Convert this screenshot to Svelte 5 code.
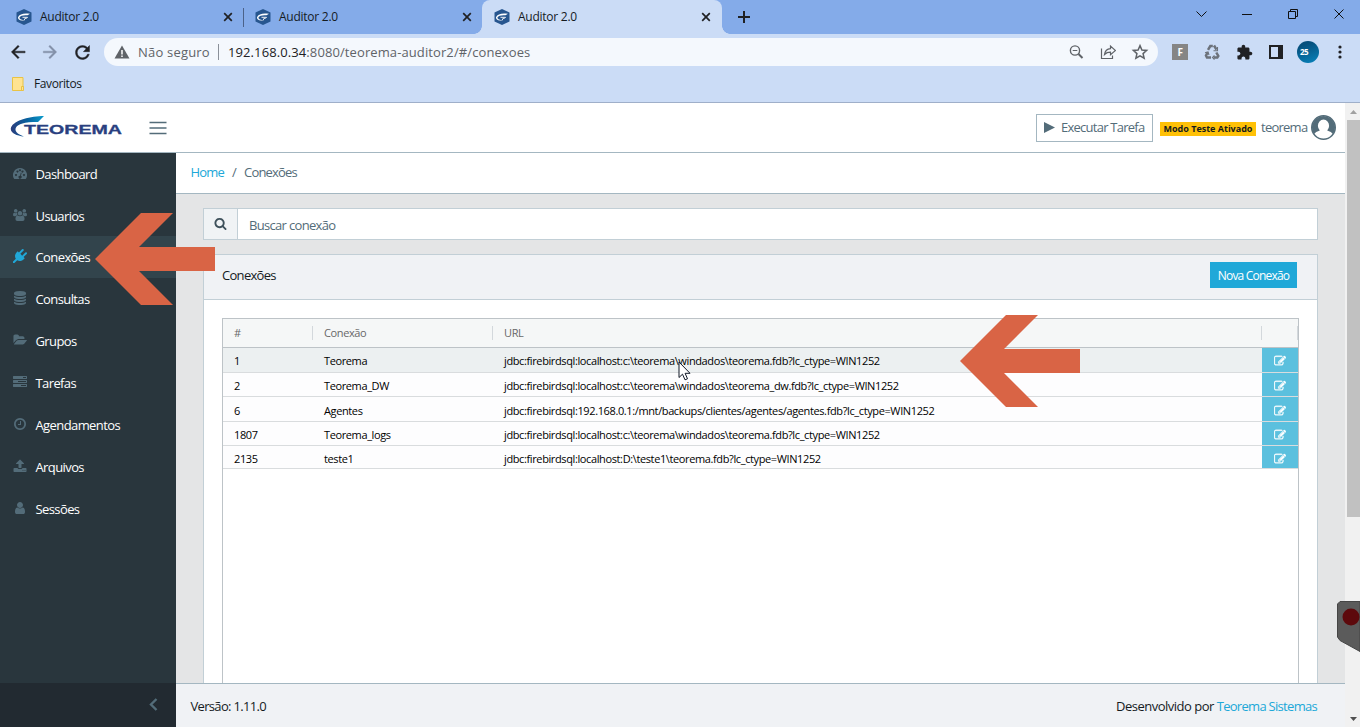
<script lang="ts">
	type MenuItem = { label: string; icon: string };
	type Connection = { id: number; name: string; url: string; height: number };

	const tabs = [
		{ title: 'Auditor 2.0', active: false },
		{ title: 'Auditor 2.0', active: false },
		{ title: 'Auditor 2.0', active: true }
	];

	const menu: MenuItem[] = [
		{ label: 'Dashboard', icon: 'dashboard' },
		{ label: 'Usuarios', icon: 'users' },
		{ label: 'Conexões', icon: 'plug' },
		{ label: 'Consultas', icon: 'database' },
		{ label: 'Grupos', icon: 'folder' },
		{ label: 'Tarefas', icon: 'tasks' },
		{ label: 'Agendamentos', icon: 'clock' },
		{ label: 'Arquivos', icon: 'upload' },
		{ label: 'Sessões', icon: 'user' }
	];

	const connections: Connection[] = [
		{ id: 1, name: 'Teorema', url: 'jdbc:firebirdsql:localhost:c:\\teorema\\windados\\teorema.fdb?lc_ctype=WIN1252', height: 25 },
		{ id: 2, name: 'Teorema_DW', url: 'jdbc:firebirdsql:localhost:c:\\teorema\\windados\\teorema_dw.fdb?lc_ctype=WIN1252', height: 24 },
		{ id: 6, name: 'Agentes', url: 'jdbc:firebirdsql:192.168.0.1:/mnt/backups/clientes/agentes/agentes.fdb?lc_ctype=WIN1252', height: 25 },
		{ id: 1807, name: 'Teorema_logs', url: 'jdbc:firebirdsql:localhost:c:\\teorema\\windados\\teorema.fdb?lc_ctype=WIN1252', height: 24 },
		{ id: 2135, name: 'teste1', url: 'jdbc:firebirdsql:localhost:D:\\teste1\\teorema.fdb?lc_ctype=WIN1252', height: 23 }
	];

	const icons: Record<string, string> = {
		dashboard:
			'M896 256a896 896 0 0 0-756 1376q19 32 56 32h1400q37 0 56-32A896 896 0 0 0 896 256zM384 1024a128 128 0 1 1-1 0zM576 576a128 128 0 1 1-1 0zM896 400a128 128 0 1 1-1 0zM1216 576a128 128 0 1 1-1 0zM1408 1024a128 128 0 1 1-1 0zM1004 850l104 28-102 382a192 192 0 1 1-104-28z',
		users:
			'M896 384a288 288 0 1 1-1 0zM350 128a230 230 0 1 1-1 0zM1442 128a230 230 0 1 1-1 0zM130 600q210 120 400-10-30 180 50 330-150 20-240 120H130q-130 0-130-130 0-250 130-310zM1662 600q-210 120-400-10 30 180-50 330 150 20 240 120h210q130 0 130-130 0-250-130-310zM600 950q296 200 592 0 270 0 290 470 0 244-244 244H554q-244 0-244-244 20-470 290-470z',
		plug:
			'M1755 453q37 38 37 90.5t-37 90.5l-401 400 150 150-160 160q-163 163-389.5 186.5t-411.5-100.5l-362 362h-181v-181l362-362q-124-185-100.5-411.5t186.5-389.5l160-160 150 150 400-401q38-37 91-37t90 37 37 90.5-37 90.5l-400 401 234 234 401-400q38-37 91-37t90 37z',
		database:
			'M896 768q237 0 443-43t325-127v170q0 69-103 128t-280 93.5-385 34.5-385-34.5-280-93.5-103-128v-170q119 84 325 127t443 43zM896 1536q237 0 443-43t325-127v170q0 69-103 128t-280 93.5-385 34.5-385-34.5-280-93.5-103-128v-170q119 84 325 127t443 43zM896 1152q237 0 443-43t325-127v170q0 69-103 128t-280 93.5-385 34.5-385-34.5-280-93.5-103-128v-170q119 84 325 127t443 43zM896 0q208 0 385 34.5t280 93.5 103 128v128q0 69-103 128t-280 93.5-385 34.5-385-34.5-280-93.5-103-128v-128q0-69 103-128t280-93.5 385-34.5z',
		folder:
			'M1943 952q0 31-31 66l-336 396q-43 51-120.5 86.5t-143.5 35.5h-1088q-34 0-60.5-13t-26.5-43q0-31 31-66l336-396q43-51 120.5-86.5t143.5-35.5h1088q34 0 60.5 13t26.5 43zm-343-344v160h-832q-94 0-197 47.5t-164 119.5l-337 396-5 6q0-4-.5-12.5t-.5-12.5v-960q0-92 66-158t158-66h320q92 0 158 66t66 158v32h544q92 0 158 66t66 158z',
		tasks:
			'M1024 1408h640v-128h-640v128zm-384-512h1024v-128h-1024v128zm640-512h384v-128h-384v128zm512 832v256q0 26-19 45t-45 19h-1664q-26 0-45-19t-19-45v-256q0-26 19-45t45-19h1664q26 0 45 19t19 45zm0-512v256q0 26-19 45t-45 19h-1664q-26 0-45-19t-19-45v-256q0-26 19-45t45-19h1664q26 0 45 19t19 45zm0-512v256q0 26-19 45t-45 19h-1664q-26 0-45-19t-19-45v-256q0-26 19-45t45-19h1664q26 0 45 19t19 45z',
		clock:
			'M1024 544v448q0 14-9 23t-23 9h-320q-14 0-23-9t-9-23v-64q0-14 9-23t23-9h224v-352q0-14 9-23t23-9h64q14 0 23 9t9 23zm416 352q0-148-73-273t-198-198-273-73-273 73-198 198-73 273 73 273 198 198 273 73 273-73 198-198 73-273zm224 0q0 209-103 385.5t-279.5 279.5-385.5 103-385.5-103-279.5-279.5-103-385.5 103-385.5 279.5-279.5 385.5-103 385.5 103 279.5 279.5 103 385.5z',
		upload:
			'M1344 1472q0-26-19-45t-45-19-45 19-19 45 19 45 45 19 45-19 19-45zm256 0q0-26-19-45t-45-19-45 19-19 45 19 45 45 19 45-19 19-45zm128-224v320q0 40-28 68t-68 28h-1472q-40 0-68-28t-28-68v-320q0-40 28-68t68-28h427q21 56 70.5 92t110.5 36h256q61 0 110.5-36t70.5-92h427q40 0 68 28t28 68zm-325-648q-17 40-59 40h-256v448q0 26-19 45t-45 19h-256q-26 0-45-19t-19-45v-448h-256q-42 0-59-40-17-39 14-69l448-448q18-19 45-19t45 19l448 448q31 30 14 69z',
		user:
			'M1536 1399q0 109-62.5 187t-150.5 78h-854q-88 0-150.5-78t-62.5-187q0-85 8.5-160.5t31.5-152 58.5-131 94-89 134.5-34.5q131 128 313 128t313-128q76 0 134.5 34.5t94 89 58.5 131 31.5 152 8.5 160.5zm-256-887q0 159-112.5 271.5t-271.5 112.5-271.5-112.5-112.5-271.5 112.5-271.5 271.5-112.5 271.5 112.5 112.5 271.5z',
		search:
			'M1216 832q0-185-131.5-316.5t-316.5-131.5-316.5 131.5-131.5 316.5 131.5 316.5 316.5 131.5 316.5-131.5 131.5-316.5zm512 832q0 52-38 90t-90 38q-54 0-90-38l-343-342q-179 124-399 124-143 0-273.5-55.5t-225-150-150-225-55.5-273.5 55.5-273.5 150-225 225-150 273.5-55.5 273.5 55.5 225 150 150 225 55.5 273.5q0 220-124 399l343 343q37 37 37 90z',
		edit:
			'M888 1184l116-116-152-152-116 116v56h96v96h56zm440-720q-16-16-33 1l-350 350q-17 17-1 33t33-1l350-350q17-17 1-33zm80 594v190q0 119-84.5 203.5t-203.5 84.5h-832q-119 0-203.5-84.5t-84.5-203.5v-832q0-119 84.5-203.5t203.5-84.5h832q63 0 117 25 15 7 18 23 3 17-9 29l-49 49q-14 14-32 8-23-6-45-6h-832q-66 0-113 47t-47 113v832q0 66 47 113t113 47h832q66 0 113-47t47-113v-126q0-13 9-22l64-64q15-15 35-7t20 29zm-96-738l288 288-672 672h-288v-288zm444 132l-92 92-288-288 92-92q28-28 68-28t68 28l152 152q28 28 28 68t-28 68z'
	};

	let current = $state('Conexões');
	let search = $state('');
</script>

{#snippet icon(name: string)}
	<svg class="icon" viewBox="0 0 {name === 'folder' ? 1960 : 1792} 1792">
		<path fill-rule={name === 'dashboard' ? 'evenodd' : 'nonzero'} d={icons[name]} />
	</svg>
{/snippet}

{#snippet arrow()}
	<svg width="120" height="92" viewBox="0 0 120 92">
		<path d="M0 46L46 0H78L44 34H120V58H44L78 92H46Z" fill="#d96445" />
	</svg>
{/snippet}

<div class="window">
	<div class="tab-strip">
		{#each tabs as tab, i}
			<div class="tab" class:active={tab.active} class:divided={i === 0}>
				<svg width="16" height="16" viewBox="0 0 16 16">
					<path d="M8 0l7.500 3.600v8.800L8 16 .5 12.400V3.600z" fill="#27568f" />
					<path d="M2 8.300C3.500 4.800 8 4 14 4.800L11.500 6.300C7.500 5.800 4.500 6.800 3.500 8.300 3 9.800 5 11 8 11.300 4 12 1.700 10.500 2 8.300z" fill="#fff" />
					<path d="M6.500 8.300h5L10.500 9.300H9L8 11.500" fill="none" stroke="#fff" stroke-width="0.900" />
				</svg>
				<span class="tab-title">{tab.title}</span>
				<svg width="10" height="10" viewBox="0 0 10 10" stroke="#202124" stroke-width="1.7">
					<path d="M1.200 1.200l7.600 7.600M8.800 1.200L1.200 8.800" />
				</svg>
			</div>
		{/each}
		<svg class="new-tab" width="12" height="12" viewBox="0 0 12 12" stroke="#202124" stroke-width="2">
			<path d="M6 0v12M0 6h12" />
		</svg>
		<svg class="window-buttons" width="150" height="14" viewBox="0 0 150 14" fill="none" stroke="#111" stroke-width="1">
			<path d="M1.500 4.500l5 5 5-5M47 7.500h10M93.500 4.500h7v7h-7zM95.500 4.500v-2h7v7h-2M139.500 2.500l9 9M148.500 2.500l-9 9" />
		</svg>
	</div>

	<div class="toolbar">
		<div class="nav-buttons">
			<svg width="20" height="20" viewBox="0 0 24 24" fill="#202124" stroke="#202124" stroke-width="0.500">
				<path d="M20.500 11H7.830l5.590-5.590L12 4l-8 8 8 8 1.410-1.410L7.830 13H20.500v-2z" />
			</svg>
			<svg width="20" height="20" viewBox="0 0 24 24" fill="#8390a8" stroke="#8390a8" stroke-width="0.500">
				<path d="M12 4l-1.410 1.410L16.170 11H4v2h12.170l-5.580 5.590L12 20l8-8z" />
			</svg>
			<svg width="21" height="21" viewBox="0 0 24 24" fill="#202124" stroke="#202124" stroke-width="0.500">
				<path d="M17.650 6.350C16.200 4.900 14.210 4 12 4c-4.420 0-7.990 3.580-7.990 8s3.570 8 7.990 8c3.730 0 6.840-2.550 7.730-6h-2.080c-.82 2.330-3.040 4-5.650 4-3.310 0-6-2.690-6-6s2.690-6 6-6c1.660 0 3.140.69 4.220 1.780L13 11h7V4l-2.350 2.350z" />
			</svg>
		</div>
		<div class="address">
			<svg width="16" height="14" viewBox="0 0 16 14">
				<path d="M8 0.500L15.500 13.500H.5z" fill="#5f6368" />
				<path d="M8 5v4.500M8 10.500v1.500" stroke="#fff" stroke-width="1.500" />
			</svg>
			<span class="insecure">Não seguro</span>
			<span class="url"><b>192.168.0.34</b>:8080/teorema-auditor2/#/conexoes</span>
			<div class="address-icons">
				<svg width="16" height="16" viewBox="0 0 16 16" fill="none" stroke="#5f6368" stroke-width="1.400">
					<circle cx="6" cy="6.500" r="4.600" />
					<path d="M9.500 10l4 4" stroke-width="1.900" />
					<path d="M3.700 6.500h4.600" stroke-width="1" />
				</svg>
				<svg width="16" height="16" viewBox="0 0 16 16" fill="none" stroke="#5f6368" stroke-width="1.200">
					<path d="M1.500 4.500v10h11v-3M4.500 10.500C5 7 7 5 10.500 4.700V2l5 4.500-5 4.300V8.200C7.500 8.200 6 9 4.500 10.500z" />
				</svg>
				<svg width="18" height="18" viewBox="0 0 24 24" fill="none" stroke="#5f6368" stroke-width="2">
					<path d="M12 3.500l2.550 5.800 6.300.6-4.750 4.200 1.400 6.200L12 17l-5.500 3.300 1.400-6.200-4.750-4.200 6.300-.6z" />
				</svg>
			</div>
		</div>
		<div class="extensions">
			<span class="ext-f">F</span>
			<svg width="16" height="16" viewBox="0 0 16 16" fill="none" stroke="#6c727b" stroke-width="2.500">
				<path d="M4 5.800L6.300 2h2.500M10 1.500l2.500 4.200M12.300 8.500l2 3.500-1 1.500H9.500M7 13.500H3l-1-2 1.800-3.200" />
				<path d="M13.500 3v3.800h-4M10.500 11.500l-2 2 2 2M1 8.800l3-.8 1 3" stroke-width="1.100" />
			</svg>
			<svg width="17" height="17" viewBox="0 0 24 24" fill="#202124">
				<path d="M20.500 11H19V7c0-1.100-.9-2-2-2h-4V3.500C13 2.120 11.880 1 10.500 1S8 2.120 8 3.500V5H4c-1.100 0-1.990.9-1.990 2v3.800H3.500c1.490 0 2.700 1.210 2.700 2.700s-1.210 2.700-2.700 2.700H2V20c0 1.100.9 2 2 2h3.800v-1.500c0-1.490 1.210-2.700 2.700-2.700 1.490 0 2.700 1.210 2.700 2.700V22H17c1.100 0 2-.9 2-2v-4h1.500c1.380 0 2.500-1.120 2.500-2.500S21.880 11 20.500 11z" />
			</svg>
			<svg width="14" height="14" viewBox="0 0 14 14">
				<path d="M1 1h12v12H1z" fill="none" stroke="#202124" stroke-width="2" />
				<path d="M9 0h5v14H9z" fill="#202124" />
			</svg>
			<span class="profile">25</span>
			<svg width="4" height="14" viewBox="0 0 4 14" fill="#202124">
				<circle cx="2" cy="2" r="1.600" /><circle cx="2" cy="7" r="1.600" /><circle cx="2" cy="12" r="1.600" />
			</svg>
		</div>
	</div>

	<div class="bookmarks">
		<svg width="12" height="14" viewBox="0 0 12 14">
			<path d="M.5.5h10.500v9h.5v4H.5z" fill="#ffe391" stroke="#e9c345" />
			<path d="M9.500 13v-3.500h2" fill="none" stroke="#e9c345" />
		</svg>
		<span>Favoritos</span>
	</div>

	<div class="page">
		<div class="app">
			<header>
				<svg class="logo" width="114" height="24" viewBox="0 0 114 24">
					<defs>
						<linearGradient id="swoosh">
							<stop offset="0" stop-color="#2b3d7d" />
							<stop offset="0.500" stop-color="#08619e" />
							<stop offset="1" stop-color="#0a9ccc" />
						</linearGradient>
					</defs>
					<path d="M34 0C21 0 4 4 1 11.500c-1.500 5 5 8 13 9C8 18.500 4 15.500 6 11.500 8 8 14 6 28 6z" fill="url(#swoosh)" />
					<text x="14" y="17.800" textLength="98" lengthAdjust="spacingAndGlyphs">TEOREMA</text>
				</svg>
				<svg class="burger" width="18" height="14" viewBox="0 0 18 14" stroke="#536c79" stroke-width="1.300">
					<path d="M.5 1.500h17M.5 7h17M.5 12.500h17" />
				</svg>
				<div class="header-right">
					<button class="run">
						<svg width="11" height="11" viewBox="0 0 11 11"><path d="M0 0l11 5.500L0 11z" fill="#536c79" /></svg>
						<span>Executar Tarefa</span>
					</button>
					<span class="badge">Modo Teste Ativado</span>
					<span class="username">teorema</span>
					<svg width="25" height="25" viewBox="0 0 25 25">
						<circle cx="12.500" cy="12.500" r="11.700" fill="#fff" stroke="#536c79" stroke-width="1.600" />
						<path d="M3 19A11.500 11.500 0 1 1 22 19Q20.500 16.500 16.200 15.500a5.600 6.300 0 1 0-7.400 0Q4.500 16.500 3 19z" fill="#536c79" />
					</svg>
				</div>
			</header>

			<div class="body">
				<aside>
					<nav>
						{#each menu as item (item.label)}
							<a href="#/" class:current={item.label === current}>
								{@render icon(item.icon)}
								<span>{item.label}</span>
							</a>
						{/each}
					</nav>
					<div class="minimizer">
						<svg width="9" height="13" viewBox="0 0 9 13" fill="none" stroke="#536c79" stroke-width="2.400">
							<path d="M7.500 1L2 6.500 7.500 12" />
						</svg>
					</div>
				</aside>

				<main>
					<div class="breadcrumb">
						<a href="#/">Home</a><span class="slash">/</span><span>Conexões</span>
					</div>
					<div class="content">
						<div class="search">
							<span class="search-icon">{@render icon('search')}</span>
							<input placeholder="Buscar conexão" bind:value={search} />
						</div>
						<section class="card">
							<div class="card-header">
								<span>Conexões</span>
								<button class="new">Nova Conexão</button>
							</div>
							<div class="grid">
								<div class="grid-row grid-head">
									<span>#</span><span>Conexão</span><span>URL</span><span></span>
								</div>
								{#each connections as c (c.id)}
									<div class="grid-row" style:height="{c.height}px">
										<span>{c.id}</span>
										<span>{c.name}</span>
										<span>{c.url}</span>
										<button class="edit" aria-label="Editar">{@render icon('edit')}</button>
									</div>
								{/each}
							</div>
						</section>
					</div>
					<footer>
						<span>Versão: 1.11.0</span>
						<span class="credits">Desenvolvido por <a href="#/">Teorema Sistemas</a></span>
					</footer>
				</main>
			</div>
		</div>

		<div class="scrollbar">
			<svg width="7" height="4" viewBox="0 0 7 4"><path d="M0 4L3.500 0 7 4z" fill="#a0a0a0" /></svg>
			<div class="thumb"></div>
			<svg width="7" height="4" viewBox="0 0 7 4"><path d="M0 0h7L3.500 4z" fill="#505050" /></svg>
		</div>
	</div>

	<div class="pointer first">{@render arrow()}</div>
	<div class="pointer second">{@render arrow()}</div>
	<svg class="cursor" width="13" height="20" viewBox="0 0 13 20">
		<path d="M1 1v15.500l3.500-3.300 2.500 5.600 2.500-1-2.400-5.500H12z" fill="#fff" stroke="#111827" />
	</svg>
	<svg class="recorder" width="23" height="51" viewBox="0 0 23 51">
		<path d="M3 0.500H23V50.500L3 39.500 .5 36V3z" fill="#5b5b5b" stroke="#454545" />
		<circle cx="14" cy="16" r="8.500" fill="#5d090c" />
	</svg>
</div>

<style>
	:global(body) {
		overflow: hidden;
	}

	.window {
		position: relative;
		display: flex;
		flex-direction: column;
		width: 1360px;
		height: 727px;
		overflow: hidden;
		background: #cbdcf6;
		font-family: 'Open Sans', 'Noto Sans', sans-serif;
		font-size: 13px;
		letter-spacing: -0.6px;
		color: #151b1e;
	}

	.window * {
		box-sizing: border-box;
	}

	svg {
		display: block;
		flex: none;
	}

	button {
		font: inherit;
		letter-spacing: inherit;
		padding: 0;
		border: 0;
	}

	a {
		color: #20a8d8;
		text-decoration: none;
	}

	.icon {
		width: 14px;
		height: 14px;
		fill: currentColor;
	}

	/* browser chrome */
	.tab-strip {
		display: flex;
		align-items: center;
		height: 34px;
		padding-left: 5px;
		background: #84abe9;
	}

	.tab {
		position: relative;
		display: flex;
		align-items: center;
		width: 239px;
		height: 34px;
		padding: 0 11px;
		font-size: 12px;
		letter-spacing: -0.25px;
	}

	.tab.divided::after {
		content: '';
		position: absolute;
		right: 0;
		top: 8px;
		width: 1px;
		height: 19px;
		background: #4b6289;
	}

	.tab.active {
		width: 240px;
		margin-left: -1px;
		padding-left: 12px;
		border-radius: 8px 8px 0 0;
		background: #cbdcf6;
	}

	.tab.active::before,
	.tab.active::after {
		content: '';
		position: absolute;
		bottom: 0;
		width: 8px;
		height: 8px;
	}

	.tab.active::before {
		left: -8px;
		background: radial-gradient(circle at 0 0, #84abe9 7.5px, #cbdcf6 8px);
	}

	.tab.active::after {
		right: -8px;
		background: radial-gradient(circle at 8px 0, #84abe9 7.5px, #cbdcf6 8px);
	}

	.tab-title {
		flex: 1;
		padding: 0 0 1px 8px;
	}

	.new-tab {
		margin-left: 16px;
	}

	.window-buttons {
		margin: -6px 15px 0 auto;
	}

	.toolbar {
		display: flex;
		align-items: center;
		height: 36px;
		padding-left: 8px;
	}

	.nav-buttons {
		display: flex;
		align-items: center;
		gap: 12px;
		width: 96px;
	}

	.address {
		display: flex;
		align-items: center;
		width: 1054px;
		height: 28px;
		padding: 0 9px 0 10px;
		border-radius: 14px;
		background: #f4f8fd;
		color: #5f6368;
		letter-spacing: 0.1px;
	}

	.insecure {
		width: 81px;
		margin-left: 8px;
		border-right: 1px solid #8a9099;
		letter-spacing: 0.2px;
		line-height: 16px;
		white-space: nowrap;
	}

	.url {
		margin-left: 9px;
	}

	.url b {
		font-weight: 400;
		color: #202124;
	}

	.address-icons {
		display: flex;
		align-items: center;
		gap: 15px;
		margin-left: auto;
	}

	.extensions {
		display: grid;
		grid-template-columns: repeat(6, 32px);
		align-items: center;
		justify-items: center;
		margin-left: 6px;
	}

	.ext-f {
		width: 16px;
		height: 16px;
		background: #858585;
		color: #fff;
		font-size: 10px;
		font-weight: 700;
		line-height: 16px;
		text-align: center;
	}

	.profile {
		width: 22px;
		height: 22px;
		border-radius: 50%;
		background: linear-gradient(160deg, #064f7c 20%, #0784bd);
		color: #fff;
		font-size: 8px;
		font-weight: 700;
		line-height: 21px;
		padding-left: 3px;
	}

	.bookmarks {
		display: flex;
		align-items: center;
		gap: 10px;
		height: 33px;
		padding: 0 0 5px 12px;
		border-bottom: 1px solid #9fafc9;
		font-size: 12px;
		letter-spacing: -0.4px;
	}

	/* application */
	.page {
		display: flex;
		flex: 1;
		min-height: 0;
	}

	.app {
		display: flex;
		flex-direction: column;
		width: 1345px;
		background: #fff;
	}

	header {
		display: flex;
		align-items: center;
		height: 50px;
		padding-left: 10px;
		border-bottom: 1px solid #a4b7c1;
	}

	.logo text {
		font-family: 'Liberation Sans', Arial, sans-serif;
		font-size: 13.5px;
		font-weight: 700;
		letter-spacing: 0;
		fill: #293f80;
		stroke: #293f80;
		stroke-width: 0.3;
	}

	.burger {
		margin-left: 25px;
	}

	.header-right {
		display: flex;
		align-items: center;
		margin: 0 9px 0 auto;
		color: #536c79;
	}

	.run {
		display: flex;
		align-items: center;
		gap: 6px;
		width: 117px;
		height: 28px;
		padding: 0 0 1px 7px;
		border: 1px solid #a4b7c1;
		background: #fff;
		color: #536c79;
		letter-spacing: -0.75px;
		white-space: nowrap;
	}

	.badge {
		width: 96px;
		height: 14px;
		margin: 2px 5px 0 7px;
		background: #ffc107;
		color: #151b1e;
		font-size: 9px;
		font-weight: 700;
		letter-spacing: 0;
		line-height: 14px;
		text-align: center;
		white-space: nowrap;
	}

	.username {
		width: 50px;
		padding-bottom: 2px;
		letter-spacing: -0.75px;
	}

	.body {
		display: flex;
		flex: 1;
		min-height: 0;
	}

	aside {
		display: flex;
		flex-direction: column;
		width: 176px;
		background: #29363d;
	}

	nav {
		flex: 1;
		margin-top: -1px;
		clip-path: inset(1px 0 0);
	}

	nav a {
		display: flex;
		align-items: center;
		gap: 8.5px;
		height: 41.9px;
		padding: 1.4px 0 0 13px;
		color: #fff;
		letter-spacing: -0.6px;
	}

	nav a .icon {
		width: 14px;
		height: 14px;
		margin-top: -2px;
		color: #536c79;
	}

	nav a.current {
		background: #32444c;
	}

	nav a.current .icon {
		color: #20a8d8;
	}

	.minimizer {
		display: flex;
		align-items: center;
		justify-content: flex-end;
		height: 44px;
		padding: 0 18px 2px 0;
		background: #222a31;
	}

	main {
		display: flex;
		flex-direction: column;
		flex: 1;
		min-width: 0;
	}

	.breadcrumb {
		display: flex;
		align-items: center;
		height: 41px;
		padding: 0 0 2px 14.5px;
		border-bottom: 1px solid #a4b7c1;
		color: #536c79;
		letter-spacing: -0.8px;
	}

	.slash {
		margin: 0 8px;
	}

	.content {
		display: flex;
		flex-direction: column;
		flex: 1;
		min-height: 0;
		padding: 14px 27px 0;
		background: #e4e5e6;
	}

	.search {
		display: flex;
		flex: none;
		height: 32px;
		margin-bottom: 14px;
		border: 1px solid #c2cfd6;
		background: #fff;
	}

	.search-icon {
		display: flex;
		align-items: center;
		justify-content: center;
		width: 34px;
		padding-bottom: 1px;
		border-right: 1px solid #c2cfd6;
		background: #f0f3f5;
		color: #3e515b;
	}

	.search-icon .icon {
		width: 13px;
		height: 13px;
	}

	input {
		flex: 1;
		padding: 2px 11px 0;
		border: 0;
		outline: 0;
		background: none;
		font: inherit;
		letter-spacing: -0.68px;
	}

	input::placeholder {
		color: #536c79;
	}

	.card {
		display: flex;
		flex-direction: column;
		flex: 1;
		min-height: 0;
		border: 1px solid #c2cfd6;
		border-bottom: 0;
		background: #fff;
	}

	.card-header {
		display: flex;
		justify-content: space-between;
		height: 45px;
		padding: 7px 20px 0 18px;
		border-bottom: 1px solid #c2cfd6;
		background: #f0f2f5;
		letter-spacing: -0.7px;
		line-height: 27px;
	}

	.new {
		width: 87px;
		height: 26px;
		background: #20a8d8;
		color: #fff;
		font-size: 12px;
		letter-spacing: -0.8px;
		white-space: nowrap;
	}

	.grid {
		flex: 1;
		margin: 18px 18px 0;
		border: 1px solid #bdc3c7;
		border-bottom: 0;
		font-size: 11px;
		letter-spacing: -0.38px;
	}

	.grid-row {
		display: grid;
		grid-template-columns: 90px 180px 1fr 36px;
		border-bottom: 1px solid #d9dcde;
		color: #000;
		line-height: 25px;
	}

	.grid-row > span {
		height: 22px;
		padding-left: 11px;
		white-space: nowrap;
	}

	.grid-row:nth-child(even) {
		background: #ecf0f1;
	}

	.grid-row:nth-child(n + 3) {
		background: #fdfdfe;
	}

	.grid-row:nth-child(4) > * {
		padding-top: 1px;
	}

	.grid-row.grid-head {
		height: 29px;
		border-color: #bdc3c7;
		background: #f5f7f7;
		color: #686868;
	}

	.grid-row.grid-head > span {
		height: 14px;
		margin-top: 7px;
		border-right: 1px solid #d3d8dc;
		line-height: 13px;
	}

	.edit {
		display: flex;
		justify-content: center;
		background: #5bc0de;
		color: #fff;
	}

	.edit .icon {
		width: 12px;
		height: 12px;
		margin-top: 7px;
		stroke: currentColor;
		stroke-width: 50;
	}

	footer {
		display: flex;
		align-items: center;
		justify-content: space-between;
		height: 44px;
		padding: 0 27px 0 14.5px;
		border-top: 1px solid #a4b7c1;
		background: #f0f2f5;
		letter-spacing: -0.68px;
	}

	.credits {
		margin-right: 1px;
		letter-spacing: -0.5px;
	}

	.credits a {
		letter-spacing: -0.7px;
	}

	.scrollbar {
		display: flex;
		flex-direction: column;
		align-items: center;
		width: 15px;
		padding: 7px 0 6px 1px;
		background: #f1f1f1;
	}

	.scrollbar svg:last-child {
		margin-top: auto;
	}

	.thumb {
		width: 13px;
		height: 397px;
		margin-top: 6px;
		background: #c1c1c1;
	}

	/* overlays */
	.pointer,
	.cursor,
	.recorder {
		position: absolute;
	}

	.first {
		left: 95px;
		top: 213px;
	}

	.second {
		left: 960px;
		top: 315px;
	}

	.cursor {
		left: 678px;
		top: 361px;
	}

	.recorder {
		right: 0;
		top: 601px;
	}
</style>
